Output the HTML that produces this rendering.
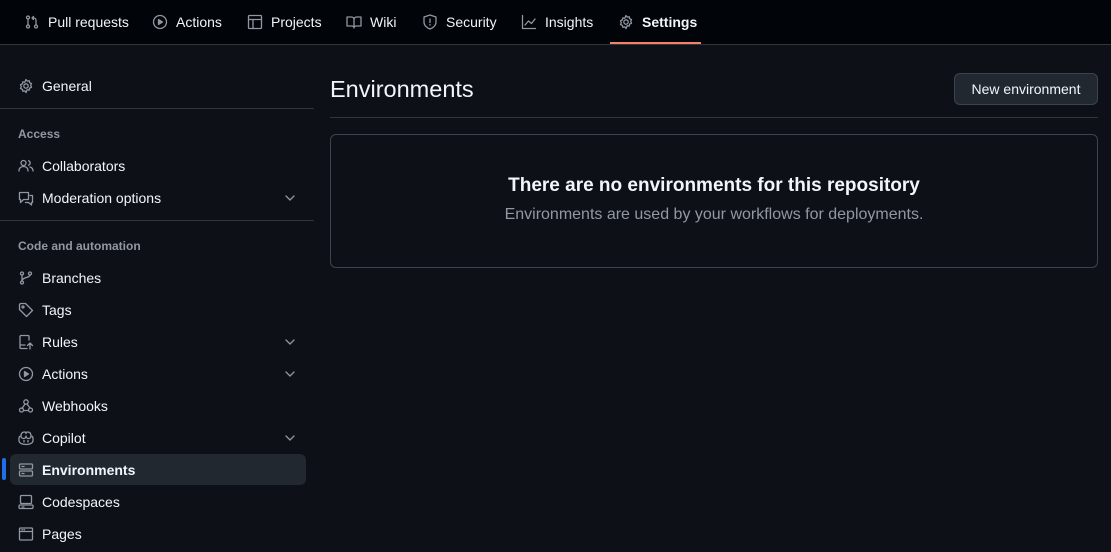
<!DOCTYPE html><html><head><style>
body{margin:0;width:1111px;height:552px;background:#0d1117;font-family:"Liberation Sans",sans-serif;color:#f0f6fc;overflow:hidden;position:relative}
.top{position:absolute;left:0;top:0;width:1111px;height:44px;background:#010409;border-bottom:1px solid #30363d}
.tab{position:absolute;top:0;height:44px;display:flex;align-items:center;font-size:14px;color:#f0f6fc}
.tab svg{margin-right:8px}
.sel{position:absolute;left:610px;top:42px;width:91px;height:2px;background:#f78166}
svg{fill:none;stroke:#9198a1;stroke-width:1.3;stroke-linecap:round;stroke-linejoin:round}
.it{position:absolute;left:18px;height:32px;display:flex;align-items:center;font-size:14px;width:290px}
.it svg{margin-right:8px}
.lab{position:absolute;left:18px;font-size:12px;color:#9198a1;font-weight:600}
.hr{position:absolute;left:0;width:314px;height:1px;background:#30363d}
.chev{position:absolute;right:4px;top:10px}
</style></head><body>
<div class="top">
<div class="tab" style="left:24px"><svg width="16" height="16"><circle cx="4" cy="3.5" r="1.5"/><circle cx="4" cy="12.5" r="1.5"/><circle cx="12" cy="12.5" r="1.5"/><path d="M4 5v6M12 11V6a2 2 0 0 0-2-2H8M9.5 2.5L8 4l1.5 1.5"/></svg>Pull requests</div>
<div class="tab" style="left:152px"><svg width="16" height="16"><circle cx="8" cy="8" r="6.5"/><path d="M6.5 5.5v5l4-2.5z" fill="#9198a1"/></svg>Actions</div>
<div class="tab" style="left:247px"><svg width="16" height="16"><rect x="1.5" y="1.5" width="13" height="13" rx="1"/><path d="M1.5 5.5h13M6 5.5v9"/></svg>Projects</div>
<div class="tab" style="left:346px"><svg width="16" height="16"><path d="M1 3h4.5a2.5 2.5 0 0 1 2.5 2.5V14a2 2 0 0 0-2-2H1zM15 3h-4.5A2.5 2.5 0 0 0 8 5.5V14a2 2 0 0 1 2-2h5z"/></svg>Wiki</div>
<div class="tab" style="left:422px"><svg width="16" height="16"><path d="M8 1l6 2v5c0 3.5-3 6-6 7-3-1-6-3.5-6-7V3z"/><path d="M8 5v3.5M8 10.5v.5"/></svg>Security</div>
<div class="tab" style="left:521px"><svg width="16" height="16"><path d="M1.5 1.5v13h13M4 11l3.5-4 3 2.5L14 5"/></svg>Insights</div>
<div class="tab" style="left:618px;font-weight:bold"><svg width="16" height="16"><circle cx="8" cy="8" r="2.2"/><path d="M8 1.5l1.2 1.6 2-.4.4 2 1.9.8-.8 1.9.8 1.9-1.9.8-.4 2-2-.4L8 14.5l-1.2-1.6-2 .4-.4-2-1.900-.8.8-1.9-.8-1.9 1.9-.8.4-2 2 .4z"/></svg>Settings</div>
<div class="sel"></div>
</div>

<div class="it" style="top:70px"><svg width="16" height="16"><circle cx="8" cy="8" r="2.2"/><path d="M8 1.5l1.2 1.6 2-.4.4 2 1.9.8-.8 1.9.8 1.9-1.9.8-.4 2-2-.4L8 14.5l-1.2-1.6-2 .4-.4-2-1.9-.8.8-1.9-.8-1.9 1.9-.8.4-2 2 .4z"/></svg>General</div>
<div class="hr" style="top:108px"></div>
<div class="lab" style="top:127px">Access</div>
<div class="it" style="top:150px"><svg width="16" height="16"><circle cx="5.5" cy="5" r="2.5"/><path d="M1 13c0-3 2-4.5 4.5-4.5S10 10 10 13M10.5 2.8a2.3 2.3 0 0 1 0 4.4M12 9c1.8.5 3 1.8 3 4"/></svg>Collaborators</div>
<div class="it" style="top:182px"><svg width="16" height="16"><path d="M1.5 2.5h9v7h-5l-3 3v-3h-1zM12 5.5h2.5v7h-1v2.5l-3-2.5h-3"/></svg>Moderation options<svg class="chev" width="12" height="12"><path d="M2 4l4 4 4-4"/></svg></div>
<div class="hr" style="top:220px"></div>
<div class="lab" style="top:239px">Code and automation</div>
<div class="it" style="top:262px"><svg width="16" height="16"><circle cx="4" cy="3.5" r="1.5"/><circle cx="4" cy="12.5" r="1.5"/><circle cx="12" cy="3.5" r="1.5"/><path d="M4 5v6M12 5c0 3-8 2-8 6"/></svg>Branches</div>
<div class="it" style="top:294px"><svg width="16" height="16"><path d="M1.5 2.5v5l7 7 6-6-7-7h-5z"/><circle cx="5" cy="5" r="1"/></svg>Tags</div>
<div class="it" style="top:326px"><svg width="16" height="16"><path d="M9 14.5H3a1 1 0 0 1-1-1v-11a1 1 0 0 1 1-1h7a1 1 0 0 1 1 1V6M2 11h5M12 15V9M9.5 11.5L12 9l2.5 2.5"/></svg>Rules<svg class="chev" width="12" height="12"><path d="M2 4l4 4 4-4"/></svg></div>
<div class="it" style="top:358px"><svg width="16" height="16"><circle cx="8" cy="8" r="6.5"/><path d="M6.5 5.5v5l4-2.5z" fill="#9198a1"/></svg>Actions<svg class="chev" width="12" height="12"><path d="M2 4l4 4 4-4"/></svg></div>
<div class="it" style="top:390px"><svg width="16" height="16"><circle cx="8" cy="4" r="2.2"/><circle cx="3.5" cy="12" r="2"/><circle cx="12.5" cy="12" r="2"/><path d="M7 6l-3 4.5M9 6l3 4M5.5 12.5h5"/></svg>Webhooks</div>
<div class="it" style="top:422px"><svg width="16" height="16"><path d="M3 6c-1.5 0-2 1-2 2.5v2C1 13 4 14.5 8 14.5S15 13 15 10.5v-2C15 7 14.5 6 13 6M3 6c0-3 1.5-4 3.5-4 1 0 1.5.5 1.5 1.5 0-1 .5-1.5 1.5-1.5 2 0 3.5 1 3.5 4 0 1.5-1 2.5-2.5 2.5S8 7.5 8 6c0 1.5-1 2.5-2.5 2.5S3 7.5 3 6zM6 10.5v1.5M10 10.5v1.5"/></svg>Copilot<svg class="chev" width="12" height="12"><path d="M2 4l4 4 4-4"/></svg></div>
<div style="position:absolute;left:10px;top:454px;width:296px;height:31px;background:#212830;border-radius:6px"></div>
<div style="position:absolute;left:2px;top:458px;width:4px;height:22px;background:#1f6feb;border-radius:3px"></div>
<div class="it" style="top:454px;font-weight:bold"><svg width="16" height="16"><rect x="1.5" y="2" width="13" height="5" rx="1"/><rect x="1.5" y="9" width="13" height="5" rx="1"/><path d="M4 4.5h2M4 11.5h2"/></svg>Environments</div>
<div class="it" style="top:486px"><svg width="16" height="16"><rect x="2.5" y="1.5" width="11" height="8" rx="1"/><rect x="1" y="11" width="14" height="3.5" rx="1"/><path d="M4 13h2"/></svg>Codespaces</div>
<div class="it" style="top:518px"><svg width="16" height="16"><rect x="1.5" y="2" width="13" height="12" rx="1"/><path d="M1.5 5.5h13M4 3.8h.5M6 3.8h.5"/></svg>Pages</div>

<div style="position:absolute;left:330px;top:74px;font-size:23.5px;line-height:30px">Environments</div>
<div style="position:absolute;left:954px;top:73px;width:142px;height:30px;border:1px solid #3d444d;background:#212830;border-radius:6px;font-size:14px;display:flex;align-items:center;justify-content:center">New environment</div>
<div style="position:absolute;left:330px;top:117px;width:768px;height:1px;background:#30363d"></div>
<div style="position:absolute;left:330px;top:134px;width:766px;height:132px;border:1px solid #3d444d;border-radius:6px;text-align:center">
<div style="margin-top:38px;font-size:19px;font-weight:bold;line-height:26px">There are no environments for this repository</div>
<div style="margin-top:7px;font-size:16px;color:#9198a1">Environments are used by your workflows for deployments.</div>
</div>
</body></html>
